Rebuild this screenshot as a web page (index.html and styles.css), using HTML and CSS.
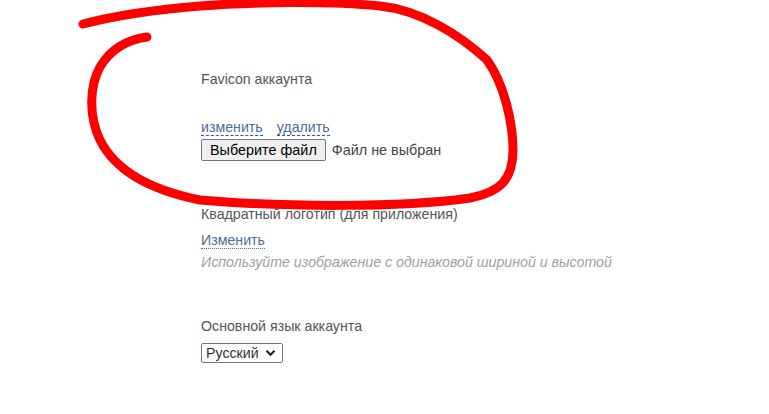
FILE: index.html
```html
<!DOCTYPE html>
<html lang="ru">
<head>
    <meta charset="UTF-8">
    <meta name="viewport" content="width=device-width, initial-scale=1.0">
    <title>Настройки аккаунта</title>
    <link rel="stylesheet" href="styles.css">
</head>
<body>
    <div class="settings">
        <div class="field favicon">
            <div class="label">Favicon аккаунта</div>
            <div class="actions">
                <a href="#" class="dashed">изменить</a>
                <a href="#" class="dashed">удалить</a>
            </div>
            <div class="file-input">
                <button type="button">Выберите файл</button>
                <span>Файл не выбран</span>
            </div>
        </div>

        <div class="field logo">
            <div class="label">Квадратный логотип (для приложения)</div>
            <a href="#" class="dotted">Изменить</a>
            <div class="hint">Используйте изображение с одинаковой шириной и высотой</div>
        </div>

        <div class="field lang">
            <div class="label">Основной язык аккаунта</div>
            <div class="select">
                <span>Русский</span>
                <svg width="11" height="8" viewBox="0 0 11 8"><path d="M1.5 1.8 L5.5 5.8 L9.5 1.8" fill="none" stroke="#222" stroke-width="2.2"/></svg>
            </div>
        </div>
    </div>

    <svg class="scribble" width="769" height="414" viewBox="0 0 769 414">
        <path d="M83,24 C110,17 150,10 200,6 S330,1 380,6 C420,10 460,35 487,60 C505,85 513,125 513,150 C513,180 500,192 470,198 C400,208 280,207 200,200 C150,190 115,170 100,140 C88,115 90,85 100,67 C110,50 125,40 147,37"
              fill="none" stroke="#ff0000" stroke-width="9" stroke-linecap="round" stroke-linejoin="round"/>
    </svg>
</body>
</html>
```

FILE: styles.css
```css
* {
    margin: 0;
    padding: 0;
    box-sizing: border-box;
}

body {
    font-family: 'Liberation Sans', Arial, sans-serif;
    font-size: 14.2px;
    color: #555;
    background: #fff;
    width: 769px;
    height: 414px;
    overflow: hidden;
    position: relative;
}

.settings {
    padding: 71px 0 0 201px;
    display: flex;
    flex-direction: column;
}

.field {
    display: flex;
    flex-direction: column;
}

.label {
    line-height: 16px;
    color: #555;
}

.favicon .actions {
    margin-top: 32px;
    display: flex;
    gap: 14px;
    line-height: 16px;
}

a {
    color: #4d6a9c;
    text-decoration: none;
}

a.dashed {
    border-bottom: 1px dashed #2b4fd8;
}

a.dotted {
    border-bottom: 1px dotted #4d6a9c;
}

.file-input {
    margin-top: 3px;
    display: flex;
    align-items: center;
    gap: 6px;
}

.file-input button {
    font-family: 'Liberation Sans', Arial, sans-serif;
    font-size: 14.4px;
    color: #000;
    background: #efefef;
    border: 1px solid #767676;
    border-radius: 2px;
    height: 22px;
    padding: 0 8px;
}

.file-input span {
    color: #444;
    font-size: 14.4px;
}

.logo {
    margin-top: 45px;
}

.logo a {
    align-self: flex-start;
    margin-top: 10px;
    line-height: 16px;
}

.hint {
    margin-top: 5px;
    font-style: italic;
    color: #a0a0a0;
    line-height: 16px;
}

.lang {
    margin-top: 48px;
}

.select {
    margin-top: 9px;
    align-self: flex-start;
    display: flex;
    align-items: center;
    gap: 6px;
    height: 20px;
    padding: 0 6px 0 4px;
    border: 1px solid #767676;
    border-radius: 2px;
    color: #333;
}

.scribble {
    position: absolute;
    top: 0;
    left: 0;
    pointer-events: none;
}
```
